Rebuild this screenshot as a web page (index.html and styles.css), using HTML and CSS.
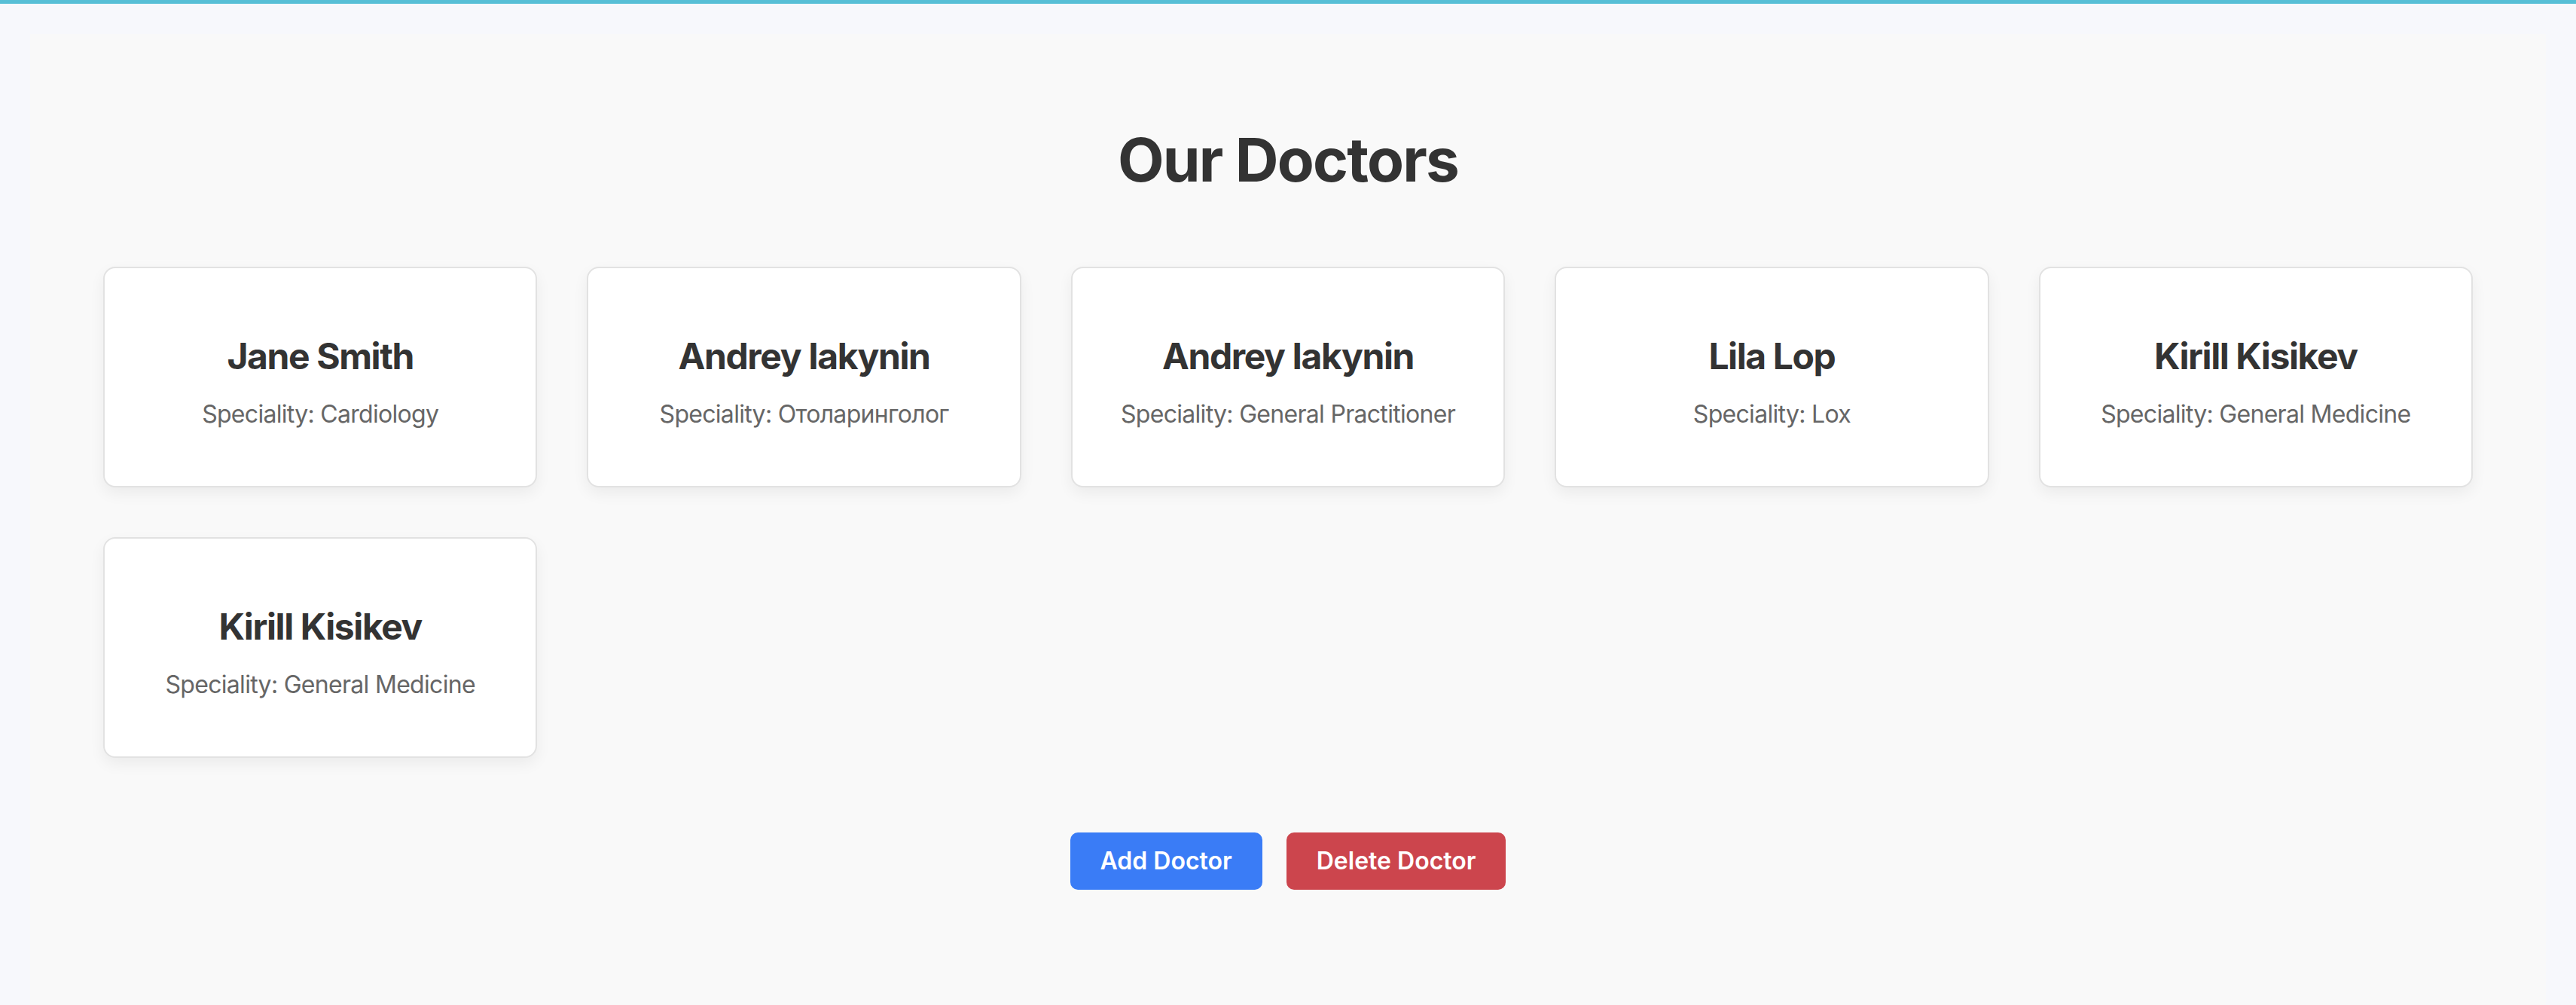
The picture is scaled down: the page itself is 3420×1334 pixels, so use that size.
FILE: index.html
```html
<!DOCTYPE html>
<html lang="en">
<head>
<meta charset="utf-8">
<title>Our Doctors</title>
<link rel="stylesheet" href="styles.css">
</head>
<body>
<main class="page">
  <h1 class="title">Our Doctors</h1>
  <section class="grid">
    <article class="card"><h3 class="name">Jane Smith</h3><p class="spec">Speciality: Cardiology</p></article>
    <article class="card"><h3 class="name">Andrey Iakynin</h3><p class="spec">Speciality: Отоларинголог</p></article>
    <article class="card"><h3 class="name">Andrey Iakynin</h3><p class="spec">Speciality: General Practitioner</p></article>
    <article class="card"><h3 class="name">Lila Lop</h3><p class="spec">Speciality: Lox</p></article>
    <article class="card"><h3 class="name">Kirill Kisikev</h3><p class="spec">Speciality: General Medicine</p></article>
    <article class="card"><h3 class="name">Kirill Kisikev</h3><p class="spec">Speciality: General Medicine</p></article>
  </section>
  <div class="actions">
    <button class="btn btn-add">Add Doctor</button>
    <button class="btn btn-delete">Delete Doctor</button>
  </div>
</main>
</body>
</html>
```
FILE: styles.css
```css
html, body {
  margin: 0;
  padding: 0;
}
body {
  background: #f7f8fc;
  border-top: 5px solid #57bfd6;
  font-family: Inter, "Noto Sans", "Liberation Sans", sans-serif;
  color: #333;
}
.page {
  margin: 40px 40px 0;
  padding: 119px 97px 80px;
  background: #f9f9f9;
  min-height: calc(100vh - 45px);
  box-sizing: border-box;
}
.title {
  margin: 0;
  text-align: center;
  font-size: 80px;
  line-height: 96px;
  font-weight: 700;
  letter-spacing: -1.8px;
  color: #333;
}
.grid {
  margin-top: 94px;
  display: grid;
  grid-template-columns: repeat(5, 1fr);
  gap: 66px;
}
.card {
  background: #fff;
  border: 2px solid #e2e2e2;
  border-radius: 16px;
  box-shadow: 0 8px 20px rgba(0, 0, 0, 0.06);
  padding: 40px;
  text-align: center;
}
.name {
  margin: 48px 0 28px;
  font-size: 48px;
  line-height: 58px;
  font-weight: 700;
  letter-spacing: -1.4px;
  color: #333;
}
.spec {
  margin: 0 0 36px;
  font-size: 32px;
  line-height: 39px;
  letter-spacing: -0.7px;
  color: #666;
}
.actions {
  margin-top: 99px;
  display: flex;
  justify-content: center;
  gap: 32px;
}
.btn {
  border: none;
  border-radius: 10px;
  padding: 20px 40px;
  font-family: Inter, "Noto Sans", "Liberation Sans", sans-serif;
  font-size: 32px;
  line-height: 36px;
  font-weight: 600;
  color: #fff;
  cursor: pointer;
}
.btn-add {
  background: #3a7cf6;
}
.btn-delete {
  background: #cc454d;
}
```
